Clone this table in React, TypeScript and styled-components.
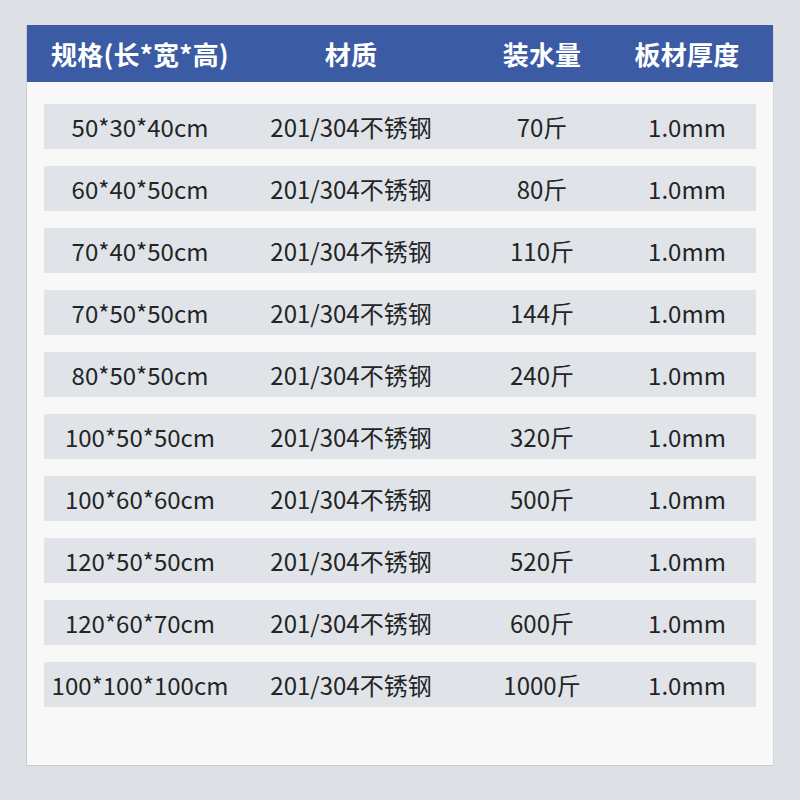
import styled, { createGlobalStyle } from "styled-components"

const GlobalStyle = createGlobalStyle`
    html, body {
        margin: 0;
        padding: 0;
        background: #dde1e5;
    }
    body {
        font-family: "Noto Sans CJK SC", "Noto Sans", sans-serif;
    }
`

const Page = styled.div`
    width: 800px;
    height: 800px;
    padding: 25px 0 0 26px;
    box-sizing: border-box;
`

const Card = styled.div`
    width: 748px;
    height: 741px;
    box-sizing: border-box;
    background: #f8f8f8;
    border-left: 1px solid #c9cccf;
    border-bottom: 1px solid #c9cccf;
    border-right: 1px solid #d4d7da;
    display: flex;
    flex-direction: column;
`

const cols = "192px 230px 152px 138px"

const Header = styled.div`
    height: 57px;
    background: #3b5ba5;
    display: grid;
    grid-template-columns: ${cols};
    align-items: center;
    padding-left: 17px;
`

const HeadCell = styled.div`
    color: #ffffff;
    font-size: 26px;
    font-weight: 700;
    text-align: center;
    letter-spacing: 0.2px;
`

const Body = styled.div`
    display: flex;
    flex-direction: column;
    gap: 17px;
    padding: 22px 0 0 17px;
`

const Row = styled.div`
    width: 712px;
    height: 45px;
    background: #e0e4e8;
    display: grid;
    grid-template-columns: ${cols};
    align-items: center;
`

const Cell = styled.div`
    color: #222426;
    font-size: 24px;
    text-align: center;
    white-space: nowrap;
`

const headers = ["规格(长*宽*高)", "材质", "装水量", "板材厚度"]

const rows = [
    ["50*30*40cm", "70斤"],
    ["60*40*50cm", "80斤"],
    ["70*40*50cm", "110斤"],
    ["70*50*50cm", "144斤"],
    ["80*50*50cm", "240斤"],
    ["100*50*50cm", "320斤"],
    ["100*60*60cm", "500斤"],
    ["120*50*50cm", "520斤"],
    ["120*60*70cm", "600斤"],
    ["100*100*100cm", "1000斤"],
]

export default function App() {
    return (
        <>
            <GlobalStyle />
            <Page>
                <Card>
                    <Header>
                        {headers.map((h) => (
                            <HeadCell key={h}>{h}</HeadCell>
                        ))}
                    </Header>
                    <Body>
                        {rows.map(([size, water]) => (
                            <Row key={size}>
                                <Cell>{size}</Cell>
                                <Cell>201/304不锈钢</Cell>
                                <Cell>{water}</Cell>
                                <Cell>1.0mm</Cell>
                            </Row>
                        ))}
                    </Body>
                </Card>
            </Page>
        </>
    )
}
